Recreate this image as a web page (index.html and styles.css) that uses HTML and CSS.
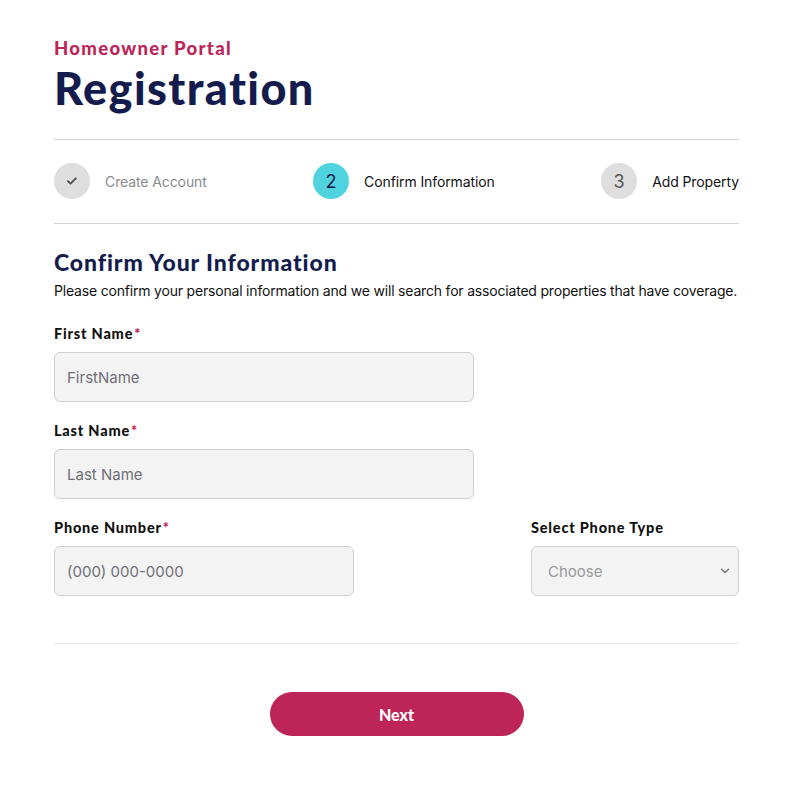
FILE: index.html
```html
<!DOCTYPE html>
<html lang="en">
<head>
<meta charset="utf-8">
<title>Registration</title>
<link rel="stylesheet" href="styles.css">
</head>
<body>
<main class="page">
  <header class="header">
    <div class="eyebrow">Homeowner Portal</div>
    <h1 class="title">Registration</h1>
  </header>
  <nav class="stepper">
    <div class="step done">
      <span class="dot"><svg width="12" height="10" viewBox="0 0 12 10"><path d="M2 5.2 L4.6 7.6 L9.8 2.4" fill="none" stroke="#555" stroke-width="2" stroke-linecap="round" stroke-linejoin="round"/></svg></span>
      <span class="step-label">Create Account</span>
    </div>
    <div class="step active">
      <span class="dot">2</span>
      <span class="step-label">Confirm Information</span>
    </div>
    <div class="step">
      <span class="dot">3</span>
      <span class="step-label">Add Property</span>
    </div>
  </nav>
  <section class="form">
    <h2 class="section-title">Confirm Your Information</h2>
    <p class="intro">Please confirm your personal information and we will search for associated properties that have coverage.</p>
    <div class="field wide first">
      <label class="label">First Name<span class="req">*</span></label>
      <input class="input" type="text" placeholder="FirstName">
    </div>
    <div class="field wide">
      <label class="label">Last Name<span class="req">*</span></label>
      <input class="input" type="text" placeholder="Last Name">
    </div>
    <div class="row">
      <div class="field phone">
        <label class="label">Phone Number<span class="req">*</span></label>
        <input class="input" type="text" placeholder="(000) 000-0000">
      </div>
      <div class="field type">
        <label class="label">Select Phone Type</label>
        <div class="select">
          <span>Choose</span>
          <svg width="10" height="6" viewBox="0 0 10 6"><path d="M1.5 1.2 L5 4.6 L8.5 1.2" fill="none" stroke="#777" stroke-width="1.4" stroke-linecap="round"/></svg>
        </div>
      </div>
    </div>
  </section>
  <div class="actions">
    <button class="next" type="button">Next</button>
  </div>
</main>
</body>
</html>
```
FILE: styles.css
```css
* { box-sizing: border-box; }
body {
  margin: 0;
  background: #fff;
  font-family: "Inter", "Roboto", sans-serif;
  color: #1a1a1a;
}
.page {
  width: 685px;
  margin-left: 54px;
  padding-top: 36px;
}
.header {
  padding-bottom: 22px;
  border-bottom: 1px solid #d6d6d6;
}
.eyebrow {
  font-family: "Lato", "DejaVu Sans", sans-serif;
  font-weight: 900;
  font-size: 18.5px;
  letter-spacing: 1.3px;
  line-height: 24px;
  color: #bd2457;
}
.title {
  margin: 0;
  font-family: "Lato", "DejaVu Sans", sans-serif;
  font-weight: 900;
  font-size: 45px;
  letter-spacing: 1.4px;
  line-height: 57px;
  color: #141c4d;
}
.stepper {
  display: flex;
  justify-content: space-between;
  align-items: center;
  padding: 23px 0 24px;
  border-bottom: 1px solid #d6d6d6;
}
.step {
  display: flex;
  align-items: center;
  gap: 15px;
}
.dot {
  width: 36px;
  height: 36px;
  border-radius: 50%;
  background: #dedede;
  display: flex;
  align-items: center;
  justify-content: center;
  font-size: 18px;
  color: #555;
}
.step.active .dot {
  background: #4fd3df;
  color: #141c4d;
}
.step-label {
  font-size: 14px;
  letter-spacing: -0.1px;
  color: #111;
}
.step.done .step-label { color: #8a8a8a; }
.form {
  padding-top: 24px;
  padding-bottom: 47px;
  border-bottom: 1px solid #e6e6e6;
}
.section-title {
  margin: 0;
  font-family: "Lato", "DejaVu Sans", sans-serif;
  font-weight: 900;
  font-size: 23px;
  letter-spacing: 0.9px;
  line-height: 28px;
  color: #141c4d;
}
.intro {
  margin: 5px 0 0;
  font-size: 14px;
  letter-spacing: -0.19px;
  line-height: 20px;
  color: #111;
  white-space: nowrap;
}
.field {
  display: flex;
  flex-direction: column;
  margin-top: 20px;
}
.field.first { margin-top: 24px; }
.field.wide { width: 420px; }
.label {
  font-family: "Lato", "DejaVu Sans", sans-serif;
  font-weight: 900;
  font-size: 14.5px;
  letter-spacing: 0.8px;
  line-height: 18px;
  color: #111;
  margin-bottom: 9px;
}
.req { color: #bd2457; margin-left: 1px; }
.input, .select {
  height: 50px;
  border: 1px solid #cfcfcf;
  border-radius: 6px;
  background: #f3f3f3;
  padding: 0 12px;
  font-family: "Inter", "Roboto", sans-serif;
  font-size: 15px;
  color: #222;
  outline: none;
}
.input::placeholder { color: #6f6f76; }
.row {
  display: flex;
  justify-content: space-between;
}
.field.phone { width: 300px; }
.field.type { width: 208px; }
.select {
  display: flex;
  align-items: center;
  justify-content: space-between;
  padding: 0 8px 0 16px;
  color: #9a9a9a;
}
.actions {
  display: flex;
  justify-content: center;
  padding-top: 48px;
}
.next {
  width: 254px;
  height: 44px;
  border: none;
  border-radius: 22px;
  background: #bd2457;
  color: #fff;
  font-family: "Lato", "DejaVu Sans", sans-serif;
  font-weight: 900;
  font-size: 16px;
  cursor: pointer;
}
```
